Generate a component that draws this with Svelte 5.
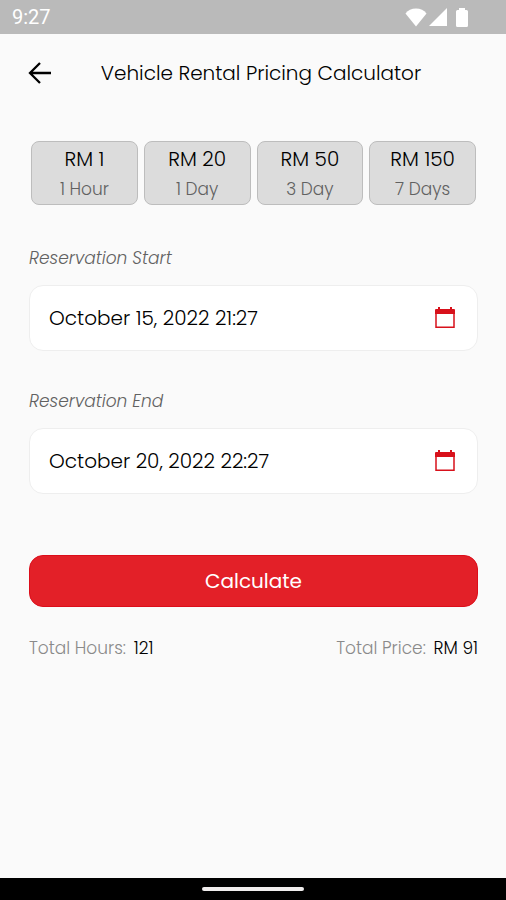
<script lang="ts">
	const rates = [
		{ price: 1, hours: 1, label: '1 Hour' },
		{ price: 20, hours: 24, label: '1 Day' },
		{ price: 50, hours: 72, label: '3 Day' },
		{ price: 150, hours: 168, label: '7 Days' }
	];

	let start = $state('October 15, 2022 21:27');
	let end = $state('October 20, 2022 22:27');
	let totalHours = $state(121);
	let totalPrice = $state(91);

	let startInput: HTMLInputElement;
	let endInput: HTMLInputElement;

	function calculate(event: SubmitEvent) {
		event.preventDefault();
		const diff = new Date(end).getTime() - new Date(start).getTime();
		if (!(diff > 0)) return;

		totalHours = Math.ceil(diff / 3600000);

		let rest = totalHours;
		let price = 0;
		for (const rate of [...rates].reverse()) {
			price += Math.floor(rest / rate.hours) * rate.price;
			rest = rest % rate.hours;
		}
		totalPrice = price;
	}
</script>

{#snippet calendarIcon()}
	<svg width="20" height="22" viewBox="0 0 20 22" aria-hidden="true">
		<path fill="#d8111b" d="M3 0h2v2h10V0h2v2h2a1 1 0 0 1 1 1v4H0V3a1 1 0 0 1 1-1h2z" />
		<path fill="none" stroke="#d8111b" stroke-width="1.500" d="M1 6v14.200h18V6" />
	</svg>
{/snippet}

<div class="screen">
	<div class="status-bar">
		<span class="time">9:27</span>
		<div class="status-icons">
			<svg width="22" height="19" viewBox="0 0 22 19" aria-hidden="true">
				<path fill="#fff" d="M11 18.500L0.500 5.500C3 2.300 6.600 0.500 11 0.500s8 1.800 10.500 5z" />
			</svg>
			<svg width="18" height="18" viewBox="0 0 18 18" aria-hidden="true">
				<path fill="#fff" d="M18 0v18H0z" />
			</svg>
			<svg class="battery" width="12" height="19" viewBox="0 0 12 19" aria-hidden="true">
				<path fill="#fff" d="M3 0h6v2h1.500A1.500 1.500 0 0 1 12 3.500v14a1.500 1.500 0 0 1-1.500 1.500h-9A1.500 1.500 0 0 1 0 17.500v-14A1.500 1.500 0 0 1 1.500 2H3z" />
			</svg>
		</div>
	</div>

	<header>
		<button class="back" type="button" aria-label="Back">
			<svg width="24" height="24" viewBox="0 0 24 24" aria-hidden="true">
				<path d="M12 2L2 12l10 10M2 12h21" fill="none" stroke="#000" stroke-width="2.300" />
			</svg>
		</button>
		<h1>Vehicle Rental Pricing Calculator</h1>
	</header>

	<main>
		<ul class="rates">
			{#each rates as rate}
				<li class="rate">
					<span class="rate-price">RM {rate.price}</span>
					<span class="rate-label">{rate.label}</span>
				</li>
			{/each}
		</ul>

		<form onsubmit={calculate}>
			<div class="field">
				<label for="start">Reservation Start</label>
				<div class="input-box">
					<input id="start" type="text" bind:value={start} bind:this={startInput} />
					<button type="button" aria-label="Pick start date" onclick={() => startInput.focus()}>
						{@render calendarIcon()}
					</button>
				</div>
			</div>

			<div class="field">
				<label for="end">Reservation End</label>
				<div class="input-box">
					<input id="end" type="text" bind:value={end} bind:this={endInput} />
					<button type="button" aria-label="Pick end date" onclick={() => endInput.focus()}>
						{@render calendarIcon()}
					</button>
				</div>
			</div>

			<button class="calculate" type="submit">Calculate</button>
		</form>

		<div class="totals">
			<div class="total">Total Hours: <span>{totalHours}</span></div>
			<div class="total">Total Price: <span>RM {totalPrice}</span></div>
		</div>
	</main>

	<div class="nav-bar"><div class="handle"></div></div>
</div>

<style>
	:global(body) {
		margin: 0;
		background: #fafafa;
	}

	.screen {
		display: flex;
		flex-direction: column;
		min-height: 100vh;
		background: #fafafa;
		color: #000;
		font-family: Poppins, Inter, sans-serif;
		font-weight: 300;
	}

	button,
	input {
		font-family: inherit;
		font-weight: inherit;
		color: inherit;
	}

	.status-bar {
		display: flex;
		align-items: center;
		justify-content: space-between;
		height: 34px;
		padding: 0 38px 0 12px;
		background: #bababa;
		color: #fff;
	}

	.time {
		font-family: Roboto, sans-serif;
		font-size: 20px;
		line-height: 34px;
		font-weight: 400;
	}

	.status-icons {
		display: flex;
		align-items: center;
		gap: 2px;
	}

	.status-icons svg {
		display: block;
	}

	.battery {
		margin-left: 7px;
	}

	header {
		display: grid;
		grid-template-columns: 24px 1fr 8px;
		align-items: center;
		height: 78px;
		padding: 0 28px;
	}

	.back {
		width: 24px;
		height: 24px;
		padding: 0;
		border: 0;
		background: none;
		cursor: pointer;
	}

	.back svg {
		display: block;
	}

	h1 {
		margin: 0;
		font-size: 20px;
		line-height: 28px;
		font-weight: inherit;
		text-align: center;
	}

	main {
		flex: 1;
		padding: 29px 28px 32px 29px;
	}

	.rates {
		display: grid;
		grid-template-columns: repeat(4, 1fr);
		gap: 6px;
		margin: 0 2px 40px;
		padding: 0;
		list-style: none;
	}

	.rate {
		display: flex;
		flex-direction: column;
		align-items: center;
		box-sizing: border-box;
		height: 64px;
		padding-top: 2px;
		border: 1px solid #bdbdbd;
		border-radius: 8px;
		background: #dcdcdc;
	}

	.rate-price {
		font-size: 20px;
		line-height: 30px;
	}

	.rate-label {
		font-size: 17px;
		line-height: 30px;
		color: #616161;
	}

	.field {
		margin-bottom: 37px;
	}

	label {
		display: block;
		margin-bottom: 14px;
		font-size: 17px;
		line-height: 26px;
		font-style: italic;
		color: #616161;
	}

	.input-box {
		display: flex;
		align-items: center;
		box-sizing: border-box;
		height: 66px;
		padding: 0 22px 0 19px;
		border: 1px solid #eeeeee;
		border-radius: 14px;
		background: #fff;
	}

	.input-box input {
		flex: 1;
		min-width: 0;
		padding: 0;
		border: 0;
		outline: none;
		background: none;
		font-size: 20px;
		line-height: 28px;
	}

	.input-box button {
		padding: 0;
		border: 0;
		background: none;
		cursor: pointer;
	}

	.input-box svg {
		display: block;
	}

	.calculate {
		display: block;
		width: 100%;
		height: 52px;
		margin-top: 61px;
		border: 1px solid #dc0d1a;
		border-radius: 14px;
		background: #e32028;
		color: #fff;
		font-size: 20px;
		font-weight: 400;
		cursor: pointer;
	}

	.totals {
		display: flex;
		justify-content: space-between;
		margin-top: 28px;
		font-size: 17px;
		line-height: 26px;
		color: #8a8a8a;
	}

	.total span {
		margin-left: 3px;
		color: #000;
	}

	.nav-bar {
		display: flex;
		align-items: center;
		justify-content: center;
		height: 22px;
		background: #000;
	}

	.handle {
		width: 102px;
		height: 4px;
		border-radius: 2px;
		background: #f0eded;
	}
</style>
